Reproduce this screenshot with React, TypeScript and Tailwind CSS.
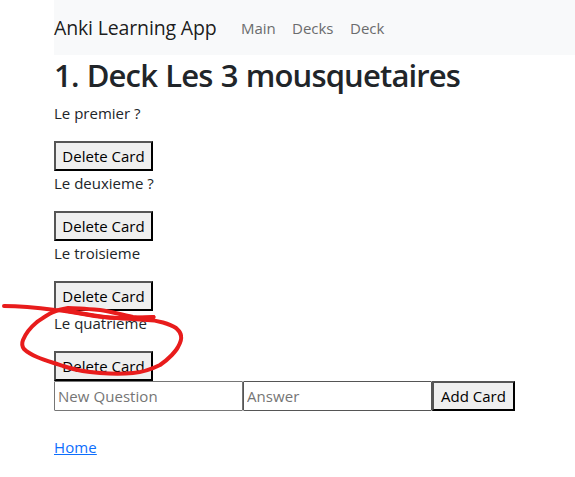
const cards = ["Le premier ?", "Le deuxieme ?", "Le troisieme", "Le quatrieme"];

const buttonClass =
  "block h-[30px] border-2 border-t-[#555] border-l-[#555] border-r-black border-b-black bg-[#efefef] text-black whitespace-nowrap leading-[26px]";

const inputClass =
  "h-[30px] w-[189px] rounded-[1px] border px-[3px] tracking-[0.05px] placeholder:text-[#757575]";

export default function App() {
  return (
    <div className="relative h-[477px] w-[575px] overflow-hidden bg-white pl-[54px] font-['Open_Sans','Noto_Sans',sans-serif] text-[15px] leading-6 text-[#212529]">
      <nav className="flex h-[55px] items-center bg-[#f8f9fa]">
        <a className="w-[187px] text-[19.5px] tracking-[-0.15px] whitespace-nowrap text-black/90">Anki Learning App</a>
        <a className="w-[51px] text-[#6b6c6d]">Main</a>
        <a className="w-[58px] text-[#6b6c6d]">Decks</a>
        <a className="text-[#6b6c6d]">Deck</a>
      </nav>
      <h1 className="h-[46px] pt-[1px] text-[31px] leading-[38px] font-semibold tracking-[-0.85px] [word-spacing:1px] whitespace-nowrap">
        1. Deck Les 3 mousquetaires
      </h1>
      {cards.map((card) => (
        <div key={card} className="h-[70px]">
          <p className="mb-4">{card}</p>
          <button className={`${buttonClass} w-[99px]`}>Delete Card</button>
        </div>
      ))}
      <form className="flex">
        <input className={`${inputClass} border-[#767676]`} placeholder="New Question" />
        <input className={`${inputClass} border-[#555]`} placeholder="Answer" />
        <button type="button" className={`${buttonClass} w-[83px]`}>Add Card</button>
      </form>
      <a className="mt-6 inline-block tracking-[0.1px] text-[#0d6efd] underline">Home</a>
      <svg className="pointer-events-none absolute top-0 left-0" width="575" height="477" fill="none" stroke="#e81c1c" strokeWidth="4" strokeLinecap="round" strokeLinejoin="round">
        <path d="M4 306C25 306 40 308 55 310C80 312 96 318 117 318C133 319 143 317 153.500 317" />
        <path d="M153.500 317C145 318 139 318 133 317C118 314 110 311 100 310C88 309 76 308 68 308C52 310 45 317 37 322C31 327 25 335 23 340Q21 345 24 349Q28 353 37 357C46 361 55 363 63 366C75 370 86 372 100 373C114 374 122 374 133 373C145 372 154 368 160 365C169 359 176 351 178 347Q182 340 181 336C181 332 178 330 176 328C170 324 157 320 147 320Q132 319 117 318C98 317 86 314 68 311" />
      </svg>
    </div>
  );
}
